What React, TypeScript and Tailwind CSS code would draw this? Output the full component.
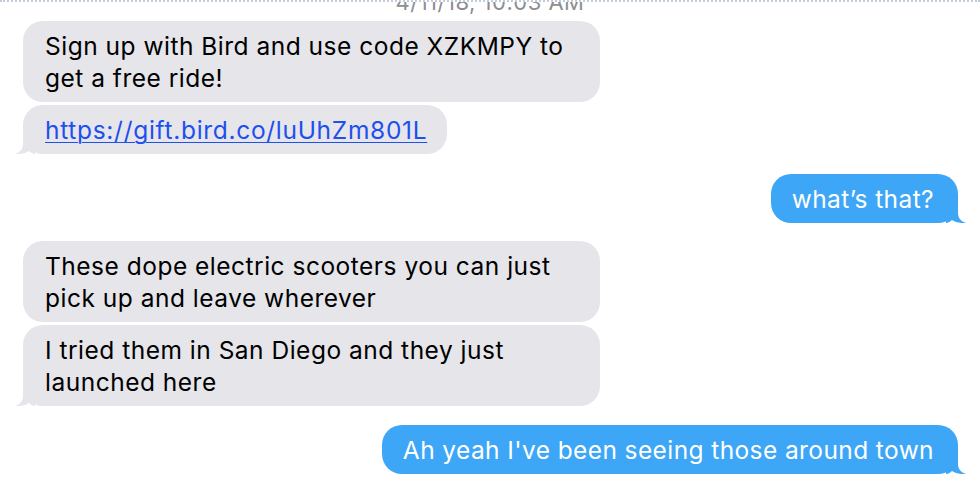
import React from "react";

const GRAY = "#E5E5EA";
const BLUE = "#3DA6F6";

function TailRight({ color }: { color: string }) {
  return (
    <svg
      className="absolute bottom-0 right-[-8px]"
      width="20"
      height="20"
      viewBox="0 0 20 20"
    >
      <path
        d="M0 0 H12 V10 C12 15 15 18.5 20 20 C14 20.5 9 19 6 17 C4 19 2 20 0 20 Z"
        fill={color}
      />
    </svg>
  );
}

function TailLeft({ color }: { color: string }) {
  return (
    <svg
      className="absolute bottom-0 left-[-8px]"
      width="20"
      height="20"
      viewBox="0 0 20 20"
    >
      <path
        d="M20 0 H8 V10 C8 15 5 18.5 0 20 C6 20.5 11 19 14 17 C16 19 18 20 20 20 Z"
        fill={color}
      />
    </svg>
  );
}

function Received({
  children,
  tail,
  wide,
}: {
  children: React.ReactNode;
  tail?: boolean;
  wide?: boolean;
}) {
  return (
    <div className="flex justify-start">
      <div
        className={
          "relative rounded-[20px] bg-[#E5E5EA] pl-[22px] pr-[20px] pt-[9px] pb-[8px] text-[24.5px] leading-[32px] tracking-[0.5px] text-black " +
          (wide ? "w-[577px]" : "")
        }
      >
        {children}
        {tail && <TailLeft color={GRAY} />}
      </div>
    </div>
  );
}

function Sent({ children }: { children: React.ReactNode }) {
  return (
    <div className="flex justify-end">
      <div className="relative rounded-[20px] bg-[#3DA6F6] pl-[21px] pr-[24px] pt-[9px] pb-[8px] text-[24.5px] leading-[32px] tracking-[0.4px] text-white">
        {children}
        <TailRight color={BLUE} />
      </div>
    </div>
  );
}

export default function App() {
  return (
    <div
      className="h-[494px] w-[980px] overflow-hidden border-t-2 border-dotted border-[#c3cdd9] bg-white"
      style={{ fontFamily: "Inter, 'Noto Sans', sans-serif" }}
    >
      <div className="flex h-[19px] items-end justify-center">
        <span className="mb-[9px] text-[22px] leading-[20px] tracking-[0.5px] text-[#8E8E93]">
          4/11/18, 10:03 AM
        </span>
      </div>
      <div className="flex flex-col pl-[23px] pr-[22px]">
        <Received wide>
          Sign up with Bird and use code XZKMPY to
          <br />
          get a free ride!
        </Received>
        <div className="h-[3px]" />
        <Received tail>
          <span className="tracking-[0.7px] text-[#1E4FEF] underline decoration-1 underline-offset-[3px]">
            https://gift.bird.co/luUhZm801L
          </span>
        </Received>
        <div className="h-[20px]" />
        <Sent>what’s that?</Sent>
        <div className="h-[18px]" />
        <Received wide>
          These dope electric scooters you can just
          <br />
          pick up and leave wherever
        </Received>
        <div className="h-[3px]" />
        <Received wide tail>
          I tried them in San Diego and they just
          <br />
          launched here
        </Received>
        <div className="h-[19px]" />
        <Sent>Ah yeah I've been seeing those around town</Sent>
      </div>
    </div>
  );
}
